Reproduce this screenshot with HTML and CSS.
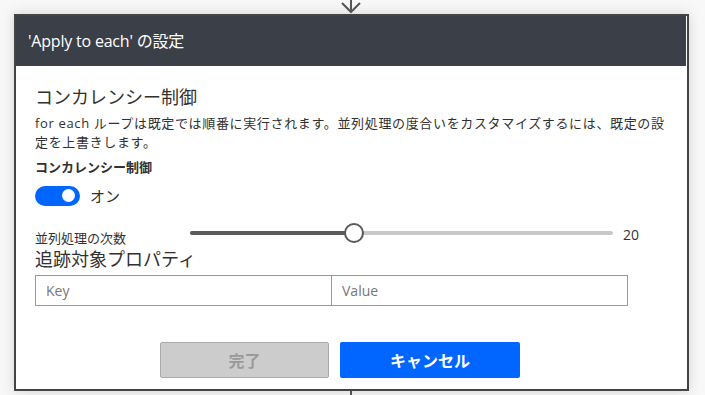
FILE: index.html
```html
<!DOCTYPE html>
<html lang="ja">
<head>
    <meta charset="UTF-8">
    <meta name="viewport" content="width=device-width, initial-scale=1.0">
    <title>Apply to each の設定</title>
    <link rel="stylesheet" href="styles.css">
</head>
<body>

    <!-- connector arrow above the card -->
    <svg class="arrow" width="24" height="14" viewBox="0 0 24 14">
        <path d="M12 0 V12 M3 3 L12 12 L21 3" fill="none" stroke="#555" stroke-width="2"/>
    </svg>

    <div class="card">
        <div class="card-header">'Apply to each' の設定</div>

        <div class="card-body">
            <h2 class="section-title">コンカレンシー制御</h2>
            <p class="desc">for each ループは既定では順番に実行されます。並列処理の度合いをカスタマイズするには、既定の設定を上書きします。</p>
            <div class="field-label">コンカレンシー制御</div>

            <div class="toggle-row">
                <span class="toggle"><span class="knob"></span></span>
                <span class="toggle-text">オン</span>
            </div>

            <div class="slider-row">
                <span class="slider-label">並列処理の次数</span>
                <div class="slider">
                    <div class="fill" style="width: 38.5%"></div>
                    <div class="thumb" style="left: 38.5%"></div>
                </div>
                <span class="slider-value">20</span>
            </div>

            <h2 class="section-title props">追跡対象プロパティ</h2>
            <div class="kv">
                <input type="text" placeholder="Key">
                <input type="text" placeholder="Value">
            </div>

            <div class="actions">
                <button class="btn btn-done" disabled>完了</button>
                <button class="btn btn-cancel">キャンセル</button>
            </div>
        </div>
    </div>

    <div class="connector"></div>

</body>
</html>
```

FILE: styles.css
```css
/* General Styles */
body {
    margin: 0;
    padding: 14px 0 0 14px;
    background: #f8f8f8;
    font-family: 'Open Sans', 'Noto Sans CJK JP', sans-serif;
    color: #323130;
    position: relative;
    height: 381px;
    overflow: hidden;
}

.arrow {
    position: absolute;
    top: 0;
    left: 339px;
}

.connector {
    position: absolute;
    left: 350px;
    top: 391px;
    width: 2px;
    height: 10px;
    background: #555;
}

.card {
    width: 675px;
    height: 377px;
    box-sizing: border-box;
    border: 2px solid #444;
    background: white;
    box-shadow: 0 0 12px rgba(0, 0, 0, 0.15);
}

.card-header {
    height: 50px;
    margin-right: 1px;
    background: #3b4048;
    color: white;
    font-size: 16px;
    line-height: 50px;
    padding-left: 12px;
    letter-spacing: -0.2px;
}

.card-body {
    padding: 18px 19px 0 19px;
}

.section-title {
    margin: 0;
    font-size: 18px;
    font-weight: normal;
    line-height: 26px;
    color: #323130;
}

.desc {
    margin: 4px 0 0;
    font-size: 13px;
    line-height: 19px;
    letter-spacing: 0.65px;
}

.field-label {
    font-size: 13px;
    font-weight: bold;
    line-height: 20px;
    margin-top: 5px;
}

.toggle-row {
    display: flex;
    align-items: center;
    gap: 10px;
    margin-top: 8px;
}

.toggle {
    width: 45px;
    height: 20px;
    border-radius: 10px;
    background: #0066ff;
    display: flex;
    align-items: center;
    justify-content: flex-end;
    padding-right: 5px;
    box-sizing: border-box;
}

.knob {
    width: 13px;
    height: 13px;
    border-radius: 50%;
    background: white;
}

.toggle-text {
    font-size: 15px;
}

.slider-row {
    display: flex;
    align-items: center;
    margin-top: 17px;
    height: 20px;
}

.slider-label {
    font-size: 13px;
    width: 155px;
    padding-top: 8px;
}

.slider {
    position: relative;
    width: 423px;
    height: 4px;
    border-radius: 2px;
    background: #c8c8c8;
}

.slider .fill {
    height: 4px;
    border-radius: 2px;
    background: #5a5a5a;
}

.slider .thumb {
    position: absolute;
    top: -8px;
    width: 16px;
    height: 16px;
    margin-left: -9px;
    border: 2px solid #5a5a5a;
    border-radius: 50%;
    background: white;
}

.slider-value {
    margin-left: 10px;
    font-size: 14px;
    padding-top: 2px;
}

.props {
    margin-top: 3px;
}

.kv {
    display: flex;
    margin-top: 3px;
}

.kv input {
    width: 297px;
    height: 31px;
    box-sizing: border-box;
    border: 1px solid #999;
    padding: 0 10px;
    font-family: 'Open Sans', sans-serif;
    font-size: 14px;
    color: #323130;
    outline: none;
}

.kv input + input {
    margin-left: -1px;
    width: 297px;
}

.kv input::placeholder {
    color: #777;
}

.actions {
    display: flex;
    gap: 11px;
    margin: 36px 0 0 125px;
}

.btn {
    height: 36px;
    border-radius: 2px;
    font-family: 'Noto Sans CJK JP', sans-serif;
    font-size: 16px;
    font-weight: bold;
    cursor: pointer;
}

.btn-done {
    width: 169px;
    background: #cccccc;
    border: 1px solid #aaa;
    color: #9a9a9a;
}

.btn-cancel {
    width: 180px;
    background: #0066ff;
    border: none;
    color: white;
}
```
